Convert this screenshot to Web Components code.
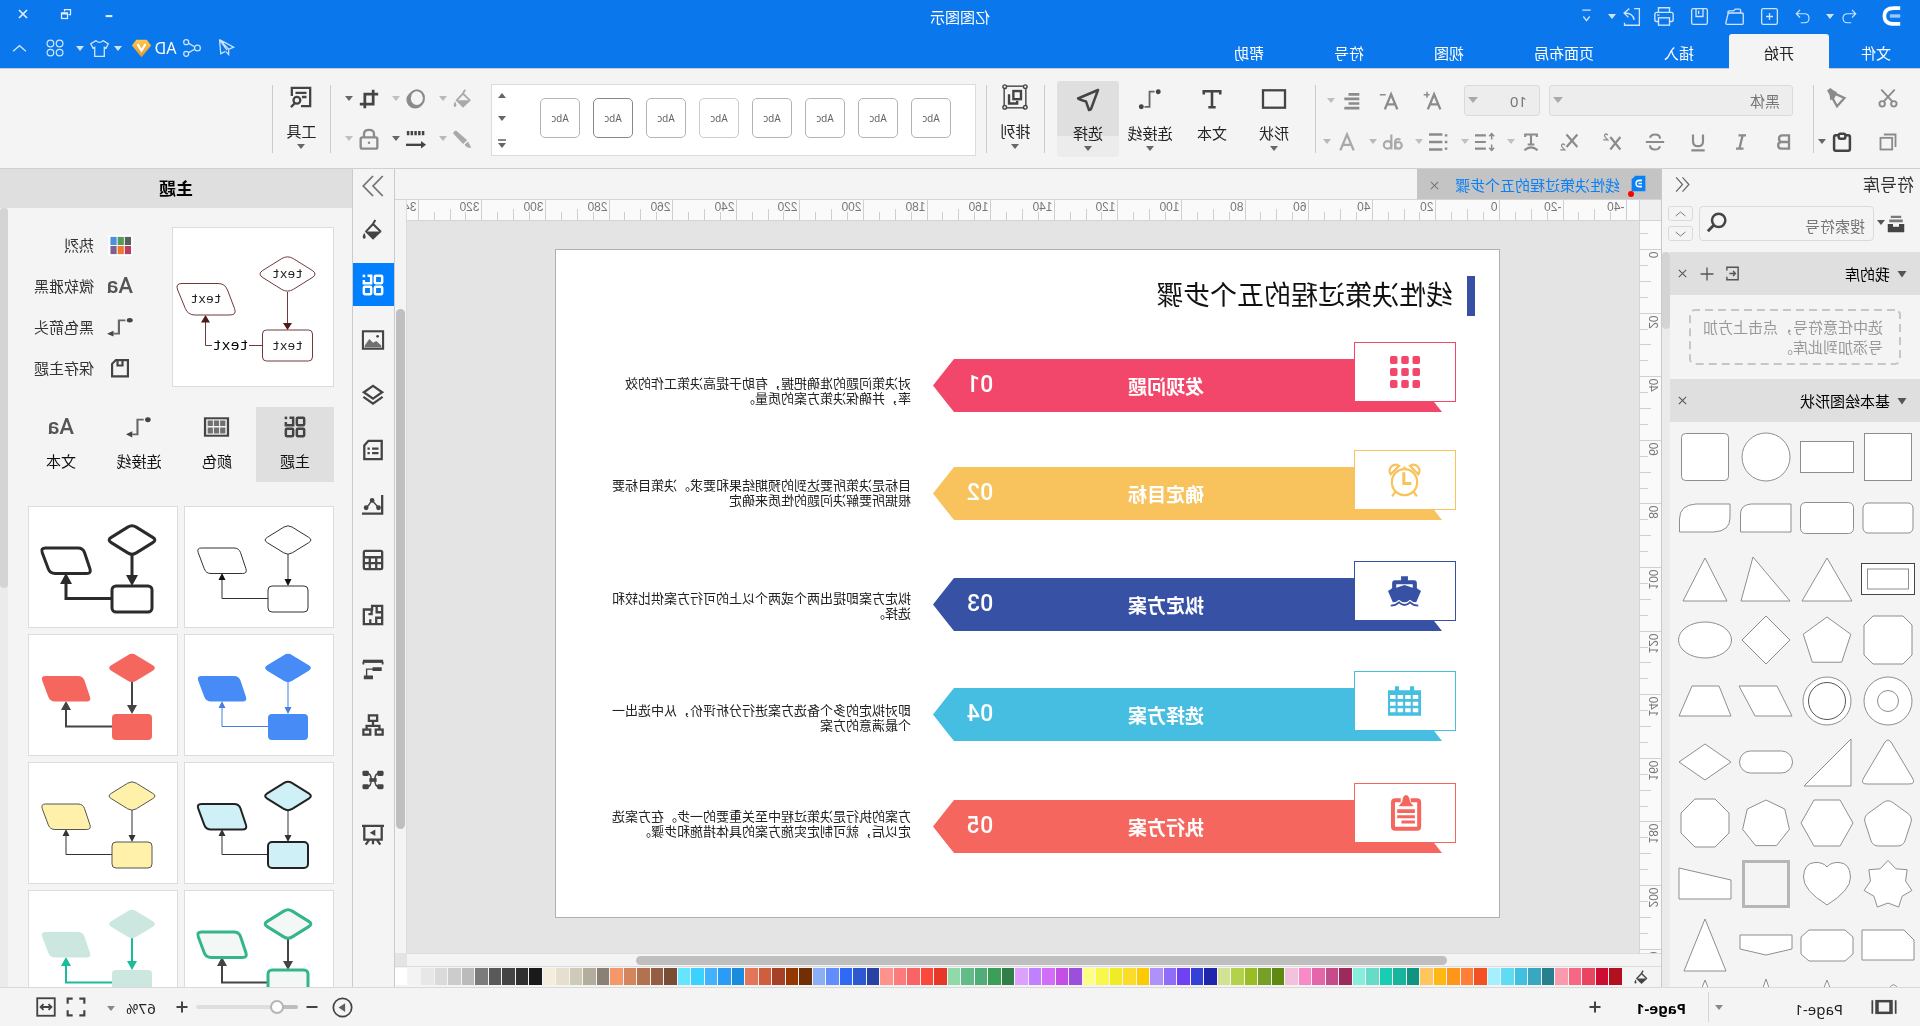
<!DOCTYPE html>
<html lang="zh-CN">
<head>
<meta charset="utf-8">
<title>亿图图示</title>
<style>
html, body { margin: 0; height: 100%; overflow: hidden; }
body { font: 15px/20px "Noto Sans", "Noto Sans CJK SC", sans-serif; color: #222; background: #f4f4f4; }
</style>
</head>
<body>
<diagram-app></diagram-app>
<script>
const BASE = `
:host { box-sizing: border-box; }
*, *::before, *::after { box-sizing: border-box; }
button { font: inherit; color: inherit; background: none; border: 0; padding: 0; margin: 0; display: flex; align-items: center; justify-content: center; }
h1, h2, p { margin: 0; font: inherit; }
svg { display: block; }
`;
function define(tag, css, html) {
  customElements.define(tag, class extends HTMLElement {
    connectedCallback() {
      if (this.shadowRoot) return;
      this.attachShadow({ mode: 'open' }).innerHTML =
        '<style>' + BASE + css + '</style>' + (typeof html === 'function' ? html(this) : html);
    }
  });
}

/* ---------- geometry helpers ---------- */
function poly(pts, r = 0) {
  if (!r) return 'M' + pts.map(p => p.join(' ')).join('L') + 'Z';
  const n = pts.length; let d = '';
  const toward = (a, b) => {
    const l = Math.hypot(b[0] - a[0], b[1] - a[1]);
    return [(a[0] + (b[0] - a[0]) * r / l).toFixed(2), (a[1] + (b[1] - a[1]) * r / l).toFixed(2)];
  };
  pts.forEach((p, i) => {
    const a = toward(p, pts[(i + n - 1) % n]), b = toward(p, pts[(i + 1) % n]);
    d += (i ? 'L' : 'M') + a.join(' ') + 'Q' + p.join(' ') + ' ' + b.join(' ');
  });
  return d + 'Z';
}
function ring(n, r, cy = 30, r2) {
  const out = [], m = r2 ? n * 2 : n;
  for (let i = 0; i < m; i++) {
    const a = -Math.PI / 2 + i * 2 * Math.PI / m, q = r2 && i % 2 ? r2 : r;
    out.push([30 + q * Math.cos(a), cy + q * Math.sin(a)]);
  }
  return out;
}

/* ---------- icons ---------- */
const L = (w, d) => `<g fill="none" stroke="currentColor" stroke-width="${w}">${d}</g>`;
const F = d => `<g fill="currentColor">${d}</g>`;
const ICONS = {
  logo: `<path d="M1 2.500H9Q21 2.500 21 12T9 21.500H1" fill="none" stroke="#fff" stroke-width="4.500"/><path d="M1 12H14" stroke="#9cc9fa" stroke-width="4"/>`,
  undo: L(1.5, '<path d="M8 4L3 9L8 14M3 9H14Q20 9 20 15Q20 21 14 21H9"/>'),
  redo: L(1.5, '<path d="M16 4L21 9L16 14M21 9H10Q4 9 4 15Q4 21 10 21H15"/>'),
  newdoc: L(1.5, '<rect x="3" y="3" width="18" height="18" rx="2"/><path d="M12 8V16M8 12H16"/>'),
  open: L(1.5, '<path d="M3 21Q2 21 2 19.500V9.500Q2 8 3.500 8H18Q19 8 19.500 9.500L22 19.500Q22 21 20.500 21ZM5 8V5Q5 3.500 6.500 3.500H11L13 5.500H18Q19.500 5.500 19.500 7V9"/>'),
  save: L(1.5, '<rect x="3" y="3" width="18" height="18" rx="2"/><path d="M8 3V12H16V3M13 5.500V9"/>'),
  print: L(1.5, '<path d="M6 8V3H18V8M6 18H4Q2 18 2 16V10Q2 8 4 8H20Q22 8 22 10V16Q22 18 20 18H18"/><rect x="6" y="14" width="12" height="8"/><path d="M17 11H19.500"/>'),
  export: L(1.5, '<path d="M9 3H3V22H20V19M9 16Q10 8 20 8M14.500 3L20.500 8L15.500 13"/>'),
  more: L(1.800, '<path d="M6 3H18M7.500 12L12 18L16.500 12"/>'),
  close: L(2.300, '<path d="M4 4L20 20M20 4L4 20"/>'),
  closeb: L(3.500, '<path d="M4 4L20 20M20 4L4 20"/>'),
  restore: L(2.500, '<path d="M7 13H3V3H15V7"/><rect x="9" y="10" width="12" height="11"/><path d="M9 11H21" stroke-width="4"/>'),
  min: L(5, '<path d="M4 17H20"/>'),
  plane: L(1.500, '<path d="M21 2L4 11L10 13.500ZM21 2L19.500 19L14 16M10 13.500V20L13 16.500M21 2L12 14.500"/>'),
  share: L(1.500, '<circle cx="5.500" cy="12" r="3.500"/><circle cx="19" cy="5" r="3"/><circle cx="19" cy="19" r="3"/><path d="M9 10.500L16 6.500M9 13.500L16 17.500"/>'),
  gem: `<defs><linearGradient id="g" x2="0" y2="1"><stop stop-color="#ffc84a"/><stop offset="1" stop-color="#e8962e"/></linearGradient></defs><path d="M6 2H18L23 8.500L12 22L1 8.500Z" fill="url(#g)"/><path d="M7.500 7L12 14.500L16.500 7" fill="none" stroke="#fff" stroke-width="2.500"/>`,
  shirt: L(1.500, '<path d="M8 3Q12 7 16 3L22 6.500L19.500 11.500L17.500 10.500V21H6.500V10.500L4.500 11.500L2 6.500Z"/>'),
  clover: L(1.500, '<rect x="2.500" y="2.500" width="8" height="8" rx="4"/><rect x="13.500" y="2.500" width="8" height="8" rx="4"/><rect x="2.500" y="13.500" width="8" height="8" rx="4"/><rect x="13.500" y="13.500" width="8" height="8" rx="4"/>'),
  up: L(1.800, '<path d="M3 16L12 8L21 16"/>'),
  down: L(1.800, '<path d="M3 8L12 16L21 8"/>'),
  cut: L(2.300, '<path d="M4 2L17 16M20 2L7 16"/><circle cx="5" cy="19" r="3.300"/><circle cx="19" cy="19" r="3.300"/>'),
  copy: L(2.200, '<path d="M3 18V3H17"/><rect x="7" y="7" width="14" height="14"/>'),
  brush: L(2.800, '<path d="M3 12L14 7L17 13L12 22Z"/>') + F('<path d="M12 5L16 3L20 0L24 3L21 8L20 15L17 13Z"/>'),
  paste: L(3, '<rect x="2.500" y="4" width="19" height="18.500" rx="2"/><rect x="8" y="2" width="8" height="6" rx="2" fill="#f4f4f4"/>'),
  bold: L(2.800, '<path d="M6 4H14Q18 4 18 8Q18 12 14 12H6ZM6 12H15Q19 12 19 16Q19 20 15 20H6Z"/>'),
  italic: L(2.800, '<path d="M6 4H15M9 20H18M10 4L14 20"/>'),
  under: L(2.600, '<path d="M6 3V11Q6 17 12 17Q18 17 18 11V3M4 22H20"/>'),
  strike: L(2.500, '<path d="M18 7Q17 3 12 3Q6 3 6 8M6 17Q7 21 12 21Q18 21 18 16M1 12H23"/>'),
  sup: L(2.600, '<path d="M2 6L14 21M14 6L2 21"/><path d="M17 4Q18 2 20 2.500Q22 4 20 6.500L17 9.500H22.500" stroke-width="1.500"/>'),
  sub: L(2.600, '<path d="M2 3L15 18M15 3L2 18"/><path d="M17 16Q18 14 20 14.500Q22 16 20 18.500L17 21.500H22.500" stroke-width="1.500"/>'),
  tcolor: L(2.500, '<path d="M5 6V3H19V6M12 3V15M8 15H16M4 22Q12 15 20 22"/>'),
  spacing: L(2.600, '<path d="M11 4H24M11 12H24M11 20H24"/><path d="M4 2V9M4 15V22M1 5L4 2L7 5M1 19L4 22L7 19" stroke-width="1.800"/>'),
  list: L(2.800, '<path d="M8 3H24M8 12H24M8 21H24M2 4H5M2 12H5M2 20H5"/>'),
  align: L(3.200, '<path d="M2 4H15M2 9.500H20M2 15H15M2 20.500H20"/>'),
  afont: L(2.800, '<path d="M4 22L12 3L20 22M7 15.500H17"/>'),
  ab: L(2.600, '<circle cx="5.500" cy="16" r="4"/><path d="M3 9Q9 7 9.500 12V21M14 3V21"/><circle cx="18.500" cy="15.500" r="4.500"/>'),
  aplus: L(2.800, '<path d="M2 22L9.500 4L17 22M5 16H14.500"/><path d="M18 1V8M15 4.500H22" stroke-width="1.800"/>'),
  aminus: L(2.800, '<path d="M2 22L9.500 4L17 22M5 16H14.500"/><path d="M16 4.500H23" stroke-width="1.800"/>'),
  rect: L(2.500, '<rect x="0" y="2.500" width="24" height="19"/>'),
  text: L(2.800, '<path d="M3 7V3.500H21V7M12 3.500V21M8 21H16"/>'),
  conn: L(2, '<path d="M7 4H12.500V20.500H18" opacity=".8"/>') + F('<circle cx="3" cy="4" r="2.700"/><circle cx="21.500" cy="20.500" r="2.700"/>'),
  connarrow: L(2, '<path d="M7 4H13V20H18" opacity=".8"/>') + F('<circle cx="3" cy="4" r="2.700"/><path d="M18 16.500L24 20L18 23.500Z"/>'),
  pick: L(2.500, '<path d="M2 3L22 11.500Q22 12.500 14 14.500L11 23Q10 23 9 22Z" stroke-linejoin="round"/>'),
  arrange: L(1.300, '<rect x="2" y="2" width="20" height="20"/><g fill="#f4f4f4"><circle cx="2.500" cy="2.500" r="1.700"/><circle cx="21.500" cy="2.500" r="1.700"/><circle cx="2.500" cy="21.500" r="1.700"/><circle cx="21.500" cy="21.500" r="1.700"/></g>') + L(2.200, '<rect x="6.500" y="6.500" width="7" height="7.500"/><path d="M17.500 9.500V18H10V15.500"/>'),
  bucket: L(2.200, '<path d="M3.500 14L12 5.500L20 14M9.500 1L13 7"/>') + F('<path d="M2.500 13.500H21L12 22.500Z"/><path d="M21.500 15Q25 21 21.500 21.500Q18.500 21 21.500 15"/>'),
  shadow: `<circle cx="13" cy="13" r="10.500" fill="currentColor"/><ellipse cx="11" cy="11" rx="8.500" ry="9.500" fill="#f4f4f4" stroke="currentColor" stroke-width="2.500"/>`,
  crop: L(3.300, '<path d="M1 6H17V23M7 1V18H23"/>'),
  pen: F('<path d="M22 2L24 5L12 18L7 13.500L20 2ZM6 15L10 18.500Q8 23 2 22.500Q4 19 6 15"/>'),
  lines: L(2.800, '<path d="M5 19H24"/><path d="M2 5H24" stroke-width="5" stroke-dasharray="3 1.500"/>') + F('<path d="M6 14.500L0 19L6 23.500Z"/>'),
  lock: L(2.800, '<rect x="2" y="10" width="20" height="13.500" rx="2"/><path d="M6 10V6Q6 1 12 1Q18 1 18 6V10"/>') + F('<circle cx="12" cy="16.500" r="1.500"/>'),
  tools: L(2.500, '<path d="M12 22H2V2H22V11M6 7.500H18M6 12H11"/><circle cx="16.500" cy="15.500" r="3.700"/><path d="M18.500 18.500L23 23"/>'),
  collapseL: L(1.700, '<path d="M12 2L3 12L12 22M21 2L12 12L21 22"/>'),
  collapseR: L(1.700, '<path d="M3 2L12 12L3 22M12 2L21 12L12 22"/>'),
  drawer: F('<path d="M5 1H19V4H5ZM3 6H21V9.500H3Z" opacity=".7"/><path d="M1 12H8V15.500H16V12H23V23H1Z"/>'),
  search: L(3, '<circle cx="10" cy="10" r="8"/><path d="M16 16L23 23" stroke-width="3.500"/>'),
  import: L(2.300, '<path d="M21 7V2H3V22H21V17M17 12H8M11 8L7.500 12L11 16"/>'),
  plus: L(2.300, '<path d="M12 1V23M1 12H23"/>'),
  plusb: L(4, '<path d="M12 1V23M1 12H23"/>'),
  minus: L(4, '<path d="M1 12H23"/>'),
  grid4: L(2.700, '<rect x="2" y="14" width="8" height="8" rx="1"/><rect x="2" y="2" width="8" height="8" rx="1"/><rect x="14" y="14" width="8" height="8" rx="1"/><path d="M18 2H14V10H22V6.500"/>') + F('<rect x="20.500" y="0.700" width="2.800" height="2.800"/>'),
  image: L(2.300, '<rect x="1" y="2.500" width="22" height="19"/>') + `<path d="M3 18L8 11L12 15L15.500 13L21 18V20H3Z" fill="currentColor" opacity=".75" transform="matrix(-1 0 0 1 24 0)"/><circle cx="7" cy="8" r="1.500" fill="currentColor"/>`,
  layers: L(2.500, '<path d="M12 2L22 9L12 16L2 9Z"/><path d="M1.500 14L12 21.500L22.500 14"/>'),
  doc: L(2.500, '<path d="M2.500 2H17L21.500 7V22H2.500ZM6 10.500H13M6 15.500H13M15.500 10.500H18M15.500 15.500H18"/>'),
  chart: L(2.500, '<path d="M2 1V21.500H24"/><path d="M6 15L13 7L19 15" stroke-width="1.500"/>') + F('<circle cx="6" cy="15" r="2.600"/><circle cx="13" cy="7" r="2.600"/><circle cx="19.500" cy="15" r="2.600"/>'),
  table: L(2.500, '<rect x="2" y="2" width="20" height="20" rx="1.500"/><path d="M2 9H22M2 15.500H22M8.500 9V22M15.500 9V22"/>'),
  plan: L(2.500, '<path d="M2 2H13V6H22V22H2ZM2 9H8V2M2 15H8.500V22M15 22V16.500M13.500 6V11H17"/>'),
  gantt: L(3, '<path d="M1 2.500H23" stroke-width="3.500"/><path d="M1.500 3V6M22.500 3V6" stroke-width="2"/><path d="M2.500 11H12.500M12 20H22" stroke-width="4"/><path d="M12 11H19V19" stroke-width="1.500"/>'),
  org: L(2.500, '<rect x="7.500" y="1.500" width="9" height="6"/><rect x="1.500" y="17" width="7.500" height="5.500"/><rect x="15" y="17" width="7.500" height="5.500"/><path d="M12 8V13M5 17V13H19V17"/>'),
  mind: L(1.600, '<path d="M5 5Q10 4 10 12Q10 20 5 19M19 5Q14 4 14 12Q14 20 19 19M9 12H15"/>') + F('<rect x="0.500" y="2" width="7" height="5.500" rx="1.500"/><rect x="16.500" y="2" width="7" height="5.500" rx="1.500"/><rect x="0.500" y="16.500" width="7" height="5.500" rx="1.500"/><rect x="16.500" y="16.500" width="7" height="5.500" rx="1.500"/><rect x="8" y="10" width="8" height="4"/>'),
  present: L(2.500, '<path d="M0 2H24M2.500 2V17H21.500V2M8 17L4 22.500M16 17L20 22.500M12 17V22"/>') + F('<path d="M9.500 6V13L15.500 9.500Z"/>'),
  swatches: `<rect x="-1" y="1" width="26" height="22" rx="2" fill="#fff"/><rect x="1" y="3" width="6.500" height="8.500" fill="#56605f"/><rect x="8.500" y="3" width="6.500" height="8.500" fill="#569a5b"/><rect x="16" y="3" width="6.500" height="8.500" fill="#4b8fe2"/><rect x="1" y="12.500" width="6.500" height="8.500" fill="#b83d63"/><rect x="8.500" y="12.500" width="6.500" height="8.500" fill="#f0752f"/><rect x="16" y="12.500" width="6.500" height="8.500" fill="#80608e"/>`,
  palette: L(2.200, '<rect x="1" y="2.500" width="22" height="19"/>') + `<path d="M3.500 5H8.500V11H3.500ZM9.500 5H14.500V11H9.500ZM15.500 5H20.500V11H15.500ZM3.500 12.500H8.500V19H3.500ZM9.500 12.500H14.500V19H9.500ZM15.500 12.500H20.500V19H15.500Z" fill="currentColor" opacity=".75"/>`,
  savetheme: L(2.600, '<path d="M2.500 2.500H17L21.500 7V22H2.500ZM9 2.500V9H15V2.500"/>'),
  pageview: L(2.500, '<rect x="6" y="5" width="12" height="14" stroke-width="3"/><path d="M2 4V20M22 4V20" stroke-width="1.500"/>'),
  play: L(2, '<circle cx="12" cy="12" r="10.500"/>') + F('<path d="M9 7V17L16.500 12Z" opacity=".85"/>'),
  full: L(2.600, '<path d="M2 8V2H8M16 2H22V8M22 16V22H16M8 22H2V16"/>'),
  fit: L(2.200, '<rect x="1.500" y="1.500" width="21" height="21"/><path d="M6 12H18M9 8.500L5.500 12L9 15.500M15 8.500L18.500 12L15 15.500"/>'),
  docicon: `<path d="M1 1H17L23 6V23H1Z" fill="#0a80f5"/><path d="M6.500 7.500H10Q16 7.500 16 12T10 16.500H6.500M6.500 12H12" fill="none" stroke="#fff" stroke-width="2.300"/>`,
  dots9: F([0, 1, 2].map(r => [0, 1, 2].map(c => `<rect x="${c * 9}" y="${r * 9}" width="6" height="6" rx="1.300"/>`).join('')).join('')),
  clock: L(1.600, '<circle cx="12" cy="13.500" r="9.200"/><path d="M5.500 20L3 23.500M18.500 20L21 23.500M12 2.500V4.500"/><path d="M2 8Q0 5 2.500 2.500Q5 0 8 2Z"/><path d="M22 8Q24 5 21.500 2.500Q19 0 16 2Z"/>') + L(2.200, '<path d="M12.500 6.500V14.500H7"/>'),
  ship: F('<path d="M9.500 1H14.500V4H19Q21 4 21 6.500V10L24 12L20.500 20.500Q18 20.500 16 18.500Q14 20.500 12 20.500Q10 20.500 8 18.500Q6 20.500 3.500 20.500L0 12L3 10V6.500Q3 4 5 4H9.500ZM6 7V9.500L12 7.500L18 9.500V7Z" fill-rule="evenodd"/>') + L(1.300, '<path d="M2 23Q5.500 23 8 20.500Q12 24.500 16 20.500Q18.500 23 22 23"/>'),
  calendar: F('<path d="M0 4H5V1H8V4H16V1H19V4H24V23H0ZM2 7.500V10.500H6V7.500ZM7.500 7.500V10.500H11.500V7.500ZM13 7.500V10.500H17V7.500ZM18.500 7.500V10.500H22.500V7.500ZM2 12.500V15.500H6V12.500ZM7.500 12.500V15.500H11.500V12.500ZM13 12.500V15.500H17V12.500ZM18.500 12.500V15.500H22.500V12.500ZM2 17.500V20.500H6V17.500ZM7.500 17.500V20.500H11.500V17.500ZM13 17.500V20.500H17V17.500ZM18.500 17.500V20.500H22.500V17.500Z" fill-rule="evenodd"/>'),
  clip: L(2.800, '<path d="M8 3.500H3.500Q2 3.500 2 5V21Q2 22.500 3.500 22.500H19Q20.500 22.500 20.500 21V5Q20.500 3.500 19 3.500H15"/>') + F('<path d="M6 7.500L8.500 4.500Q9 0 11.300 0Q13.500 0 14 4.500L16.500 7.500ZM5 9.500H17.500V12H5ZM5 13.500H17.500V15.500H5ZM5 17H14.500V19H5Z"/>'),
  tri: F('<path d="M3 6H21L12 19Z"/>')
};
define('ui-icon', ':host{display:inline-flex;flex:none}', el => {
  const w = +(el.getAttribute('size') || 20), h = +(el.getAttribute('h') || w);
  return `<svg width="${w}" height="${h}" viewBox="0 0 24 24" preserveAspectRatio="none" aria-hidden="true" overflow="visible">${ICONS[el.getAttribute('name')]}</svg>`;
});
define('drop-caret', `:host{display:block;flex:none;width:0;height:0;border:4px solid transparent;border-top:5px solid currentColor;border-bottom:0}:host([up]){transform:rotate(180deg)}`, '');

/* ---------- buttons ---------- */
define('tool-button', `
:host{display:block;flex:none;width:43px;height:31px;color:#8b8b8b}
:host([drop]){width:46px}
:host([wide]){width:47px}
:host([dark]){color:#444}
:host([pale]){color:#a9a9a9}
button{width:100%;height:100%}
:host([drop]) button{justify-content:flex-start;padding-left:7px;gap:6px}
drop-caret{opacity:.8}
:host([dim]) drop-caret{opacity:.5}
`, el => `<button aria-label="${el.getAttribute('icon')}"><ui-icon name="${el.getAttribute('icon')}" size="20"></ui-icon>${el.hasAttribute('drop') ? '<drop-caret></drop-caret>' : ''}</button>`);
define('big-button', `
:host{display:block;flex:none;width:62px;height:76px;color:#444}
button{width:100%;height:100%;flex-direction:column;justify-content:flex-start;padding-top:7px;border-radius:3px}
:host([active]) button{background:linear-gradient(#dfdfdf 55px,#ececec 55px)}
span{margin-top:12px;line-height:22px;color:#222;white-space:nowrap}
drop-caret{margin-top:2px;opacity:.8}
ui-icon{height:22px;align-items:center}
`, el => `<button><ui-icon name="${el.getAttribute('icon')}" size="${el.getAttribute('size') || 22}"></ui-icon><span><slot></slot></span>${el.hasAttribute('drop') ? '<drop-caret></drop-caret>' : ''}</button>`);

/* ---------- title bar ---------- */
define('title-bar', `
:host{display:grid;grid-template-columns:1fr auto 1fr;height:34px;background:#0a77ec;color:#cfe4fc;align-items:center}
.left{display:flex;align-items:center;padding:0 0 2px 19px}
.left>ui-icon{margin-right:16px}
.left button{width:35px;height:30px}
.left .u{gap:6px;width:47px;justify-content:flex-start;padding-left:8px}
.left .r{width:32px}
.left .e{width:43px;gap:5px}
h1{color:#fff;line-height:32px}
.right{display:flex;justify-content:flex-end;padding-right:14px;gap:25px;padding-bottom:7px}
.right button{width:18px;height:20px;color:#e3effd}
`, `
<div class="left"><ui-icon name="logo" size="19" h="20"></ui-icon>
<button class="u" aria-label="撤销"><ui-icon name="undo" size="18"></ui-icon><drop-caret></drop-caret></button>
<button class="r" aria-label="重做"><ui-icon name="redo" size="18"></ui-icon></button>
<button aria-label="新建"><ui-icon name="newdoc" size="21"></ui-icon></button>
<button aria-label="打开"><ui-icon name="open" size="21"></ui-icon></button>
<button aria-label="保存"><ui-icon name="save" size="21"></ui-icon></button>
<button aria-label="打印"><ui-icon name="print" size="22"></ui-icon></button>
<button class="e" aria-label="导出"><ui-icon name="export" size="21"></ui-icon><drop-caret></drop-caret></button>
<button aria-label="更多"><ui-icon name="more" size="17"></ui-icon></button></div>
<h1>亿图图示</h1>
<div class="right"><button aria-label="最小化"><ui-icon name="min" size="10"></ui-icon></button><button aria-label="还原"><ui-icon name="restore" size="12"></ui-icon></button><button aria-label="关闭"><ui-icon name="closeb" size="12"></ui-icon></button></div>`);

define('menu-tabs', `
:host{display:flex;justify-content:space-between;height:35px;background:#0a77ec;color:#fff;border-bottom:1px solid #c8ccd0}
nav{display:flex}
nav button{padding:2px 35px 0;height:35px}
nav button:first-child{padding-left:29px;padding-right:32px}
nav .on{background:#f4f4f4;color:#222;border-radius:3px 3px 0 0}
.right{display:flex;align-items:center;padding:0 5px 6px 0;color:#cfe4fc}
.right button{height:24px}
.plane{width:38px}.share{width:32px}
.user{color:#fff;font-size:16px;gap:3px;width:62px}.user drop-caret{margin-left:6px}
.shirt{width:41px;gap:5px}.clover{width:36px}.up{width:32px;justify-content:flex-end;padding-right:6px}
drop-caret{color:#cfe4fc}
`, `<nav><button>文件</button><button class="on">开始</button><button>插入</button><button>页面布局</button><button>视图</button><button>符号</button><button>帮助</button></nav>
<div class="right"><button class="plane" aria-label="发送"><ui-icon name="plane" size="20"></ui-icon></button><button class="share" aria-label="分享"><ui-icon name="share" size="20"></ui-icon></button><button class="user">AD<ui-icon name="gem" size="21"></ui-icon><drop-caret></drop-caret></button><button class="shirt" aria-label="皮肤"><ui-icon name="shirt" size="21"></ui-icon><drop-caret></drop-caret></button><button class="clover" aria-label="应用"><ui-icon name="clover" size="20"></ui-icon></button><button class="up" aria-label="收起"><ui-icon name="up" size="17"></ui-icon></button></div>`);

/* ---------- ribbon ---------- */
const tb = (s) => s.trim().split(/\s+/).map(t => { const [n, ...a] = t.split(':'); return `<tool-button icon="${n}" ${a.join(' ')}></tool-button>`; }).join('');
define('ribbon-bar', `
:host{display:flex;height:100px;background:#f4f4f4;border-bottom:1px solid #cfcfcf;overflow:hidden}
.sep{flex:none;width:1px;height:68px;margin-top:16px;background:#cbcbcb}
.rows{display:flex;flex-direction:column;gap:10px;padding-top:16px}
.r{display:flex;height:31px}
.clip{width:106px;padding:13px 0 0 10px;gap:13px}
.font{width:497px;padding-left:7px}
.font .r:first-child{padding-left:13px}
.clip .r{gap:8px}
select{appearance:none;height:31px;border:1px solid #dadada;border-radius:3px;background:#ededed;color:#777;font:inherit;padding:0 12px;width:100%;display:block}
.sel{position:relative;margin-right:9px}
.sel drop-caret{position:absolute;right:4px;top:12px;color:#aaa;border-width:5px;border-top-width:6px;border-bottom:0}
.family{width:244px}.size{width:76px;margin-right:10px}
.big{display:flex;padding:12px 12px 0 10px}
.arr,.tool{padding-top:10px;width:57px}
.arr big-button,.tool big-button{width:57px}
.gallery{display:flex;align-items:center;justify-content:space-between;width:485px;height:72px;margin:15px 11px 0 10px;background:#fff;border:1px solid #dcdcdc;padding:0 6px 0 24px}
.cards{display:flex;gap:13px;padding-bottom:5px}
.cards button{width:40px;height:40px;border:1px solid #b4b4b4;border-radius:5px;font-size:10px;color:#666}
.cards button:nth-child(5){border-color:#ccc}.cards button:nth-child(7){border-color:#888}
.ar{display:flex;flex-direction:column;gap:18px;color:#666}
.ar i{display:block;border-top:2px solid #888;padding-top:2px}
.fx{padding-top:14px;gap:9px;width:149px}
`, `
<div class="rows clip"><div class="r">${tb('cut brush')}</div><div class="r">${tb('copy paste:drop:dark')}</div></div>
<div class="sep"></div>
<div class="rows font"><div class="r">
<div class="sel family"><select aria-label="字体"><option>黑体</option></select><drop-caret></drop-caret></div>
<div class="sel size"><select aria-label="字号"><option>10</option></select><drop-caret></drop-caret></div>
${tb('aplus aminus align:drop:dim')}</div>
<div class="r">${tb('bold italic under strike sup sub tcolor:drop:dim spacing:drop:dim list:drop:dim ab:drop:pale afont:drop:pale')}</div></div>
<div class="sep"></div>
<div class="big"><big-button icon="rect" drop>形状</big-button><big-button icon="text">文本</big-button><big-button icon="conn" drop>连接线</big-button><big-button icon="pick" size="24" drop active>选择</big-button></div>
<div class="sep"></div>
<div class="arr"><big-button icon="arrange" size="26" drop>排列</big-button></div>
<div class="sep"></div>
<div class="gallery"><div class="cards">${'<button>Abc</button>'.repeat(8)}</div><div class="ar"><drop-caret up></drop-caret><drop-caret></drop-caret><i><drop-caret></drop-caret></i></div></div>
<div class="rows fx"><div class="r">${tb('bucket:drop:pale:wide shadow:drop:dim:wide crop:drop:dark:wide')}</div><div class="r">${tb('pen:drop:pale:wide lines:drop:dark:wide lock:drop:dim:wide')}</div></div>
<div class="sep"></div>
<div class="tool"><big-button icon="tools" drop>工具</big-button></div>
<div class="sep"></div>`);

/* ---------- symbol library ---------- */
const P = (pts, r) => `<path d="${poly(pts.map(p => [p[0] + 30, p[1] + 30]), r)}"/>`;
const R = (w, h, r = 0) => `<rect x="${30 - w / 2}" y="${30 - h / 2}" width="${w}" height="${h}" rx="${r}"/>`;
const C = (a, b = a) => `<ellipse cx="30" cy="30" rx="${a}" ry="${b}"/>`;
const SHAPES = [
  R(47, 47), R(53, 31), C(24), R(47, 47, 4),
  R(50, 30, 5), R(53, 31, 5), '<path d="M5 16H45Q55.500 17 55.500 26V44H5Z"/>', '<path d="M5 16H39Q55.500 17 55.500 31V44H21Q5 43 5 30Z"/>',
  `<g stroke="#444">${R(53, 31)}</g>${R(41, 20)}`, P([[-25, 22], [0, -21], [25, 22]]), P([[-24, 22], [13, -22], [25, 22]]), P([[-22, 22], [0, -21], [22, 22]]),
  P([[-15, -24], [15, -24], [24, -15], [24, 15], [15, 24], [-15, 24], [-24, 15], [-24, -15]]), `<path d="${poly(ring(5, 25, 32))}"/>`, P([[0, -24], [24, 0], [0, 24], [-24, 0]]), C(26.500, 18),
  C(24) + C(10.500), C(24) + `<g stroke="#555">${C(18.500)}</g>`, P([[-11, -15], [27, -15], [11, 15], [-26, 15]]), P([[-14, -15], [13, -15], [26, 15], [-26, 15]]),
  P([[-28, 22], [0, -25], [28, 22]], 7), P([[-24, -23], [-24, 24], [23, 24]]), R(53, 22, 11), P([[-26, 0], [0, -18], [26, 0], [0, 18]]),
  `<path d="${poly(ring(5, 26, 32), 6)}"/>`, P([[-26, 0], [-13, -23], [13, -23], [26, 0], [13, 23], [-13, 23]]), `<path d="${poly(ring(7, 24, 31))}"/>`, P([[-10, -24], [10, -24], [24, -10], [24, 10], [10, 24], [-10, 24], [-24, 10], [-24, -10]]),
  `<path d="${poly(ring(7, 24.500, 31, 18))}"/>`, '<path d="M30 51Q6 36 6.500 23Q7 9 18 8.500Q26 8 30 13Q34 8 42 8.500Q53 9 53.500 23Q54 36 30 51Z"/>', `<g stroke-width="3" stroke="#b6b6b6" fill="#f4f4f4">${R(45, 45)}</g>`, P([[-26, -4], [26, -16], [26, 15], [-26, 15]]),
  P([[-26, -5], [-16, -15], [26, -15], [26, 15], [-26, 15]]), P([[-18, -15], [18, -15], [26, -8], [26, 9], [18, 16], [-18, 16], [-26, 9], [-26, -8]]), P([[-26, -10], [26, -10], [26, 4], [0, 10], [-26, 4]]), P([[0, -26], [21, 26], [-21, 26]]),
  '<path d="M16 30Q20 2 28 11L34 20"/>', P([[0, -26], [10, 0], [-10, 0]]), P([[0, -27], [9, 0], [-9, 0]]), P([[0, -26], [10, 0], [-10, 0]])
];
define('library-section', `
:host{display:block}
header{display:flex;align-items:center;height:43px;background:#dfdfdf;padding:0 0 0 12px;color:#555}
h2{color:#000;margin-left:6px;flex:1;line-height:43px;padding-top:2px}
button{width:25px;height:24px}
`, el => `<header><ui-icon name="tri" size="12"></ui-icon><h2>${el.getAttribute('heading')}</h2>
${el.hasAttribute('mine') ? '<button aria-label="导入"><ui-icon name="import" size="15"></ui-icon></button><button aria-label="添加"><ui-icon name="plus" size="14"></ui-icon></button>' : ''}<button aria-label="关闭"><ui-icon name="close" size="11"></ui-icon></button></header><slot></slot>`);
define('symbol-library', `
:host{display:flex;flex-direction:column;width:259px;flex:none;background:#f4f4f4;border-right:1px solid #c9c9c9;min-height:0}
.top{display:flex;justify-content:space-between;align-items:center;height:37px;padding:0 12px 6px 6px;color:#333;font-size:17px}
.top button{color:#666}
.find{display:flex;align-items:center;height:46px;padding:0 6px 11px 15px;color:#555}
.find drop-caret{margin:0 3px 3px 2px}
.find>ui-icon{color:#444}
.box{display:flex;align-items:center;width:175px;height:35px;border:1px solid #dadada;border-radius:4px;padding:0 7px 0 8px;color:#444}
.box ui-icon{margin-bottom:3px}
input{flex:1;min-width:0;border:0;outline:0;background:none;font:inherit;padding:4px 0 0;color:#777}
input::placeholder{color:#777;opacity:1}
.step{display:flex;flex-direction:column;gap:5px;margin-left:6px}
.step button{width:25px;height:15px;border:1px solid #dadada;border-radius:3px;color:#777}
.scroll{display:flex;flex:1;min-height:0;overflow:hidden}
.body{width:250px;overflow:hidden}
.track{width:8px;background:#ebebeb}.track i{display:block;height:77px;border-radius:4px;background:#d4d4d4}
.hint{margin:14px 19px;width:212px;height:56px;color:#999;position:relative;padding:8px 14px 8px 18px;line-height:20px;white-space:nowrap}
.hint svg{position:absolute;inset:0}
.shapes{display:grid;grid-template-columns:repeat(4,61px);grid-auto-rows:61px;padding:5px 0 0 2px}
.shapes svg{fill:#fff;stroke:#8e8e8e;stroke-width:1}
`, `
<div class="top"><h2>符号库</h2><button aria-label="折叠"><ui-icon name="collapseL" size="17"></ui-icon></button></div>
<div class="find"><ui-icon name="drawer" size="18"></ui-icon><drop-caret></drop-caret><label class="box"><input type="text" placeholder="搜索符号" aria-label="搜索符号"><ui-icon name="search" size="20"></ui-icon></label>
<div class="step"><button aria-label="上一个"><ui-icon name="up" size="13" h="12"></ui-icon></button><button aria-label="下一个"><ui-icon name="down" size="13" h="12"></ui-icon></button></div></div>
<div class="scroll"><div class="body">
<library-section heading="我的库" mine><div class="hint"><svg width="212" height="56"><rect x="1" y="1" width="210" height="54" rx="5" fill="none" stroke="#c6c6c6" stroke-width="2" stroke-dasharray="8 5"/></svg>选中任意符号，点击上方加<br>号添加到此库。</div></library-section>
<library-section heading="基本绘图形状"><div class="shapes">${SHAPES.map(s => `<svg width="60" height="60">${s}</svg>`).join('')}</div></library-section>
</div><div class="track"><i></i></div></div>`);

/* ---------- rulers ---------- */
function ticks(vertical) {
  let s = ''; const step = 63.6 / 4, origin = vertical ? 28 : 139, from = vertical ? -1 : -8, to = vertical ? 60 : 120, last = vertical ? 44 : 68;
  for (let i = from; i <= to; i++) {
    const p = Math.round(origin + i * step) + 0.5, major = i % 4 === 0, mid = i % 2 === 0;
    if (vertical) s += `<path d="M${major ? 0 : mid ? 10 : 13} ${p}H22"/>`;
    else s += `<path d="M${p} ${major ? 0 : mid ? 9 : 12}V21"/>`;
    if (major && i <= last) s += vertical
      ? `<text transform="translate(12 ${p + 2}) rotate(-90)" text-anchor="end">${i * 5}</text>`
      : `<text x="${p + 2}" y="11">${i * 5}</text>`;
  }
  return s;
}
define('ruler-bar', `:host{display:block;background:#fafafa;overflow:hidden;border-bottom:1px solid #d4d4d4;min-width:0;min-height:0}
:host([vertical]){border-bottom:0;border-right:1px solid #d4d4d4}
svg{width:100%;height:100%;stroke:#cfcfcf;shape-rendering:crispEdges;fill:none}
text{font:12px "Liberation Sans",sans-serif;fill:#777;stroke:none}`, el => `<svg>${ticks(el.hasAttribute('vertical'))}</svg>`);

/* ---------- drawing page ---------- */
define('step-item', `
:host{display:block;position:absolute;left:43px;top:var(--top);color:var(--c)}
.box{position:absolute;left:0;top:0;width:102px;height:60px;background:#fff;border:1px solid var(--c);display:flex;align-items:center;justify-content:center}
.band{margin:17px 0 0 14px;width:509px;height:53px;background:var(--c);clip-path:polygon(42px 0,488px 0,100% 50%,488px 100%,0 100%);display:flex;align-items:center;color:#fff;padding:0 34px 0 238px;justify-content:space-between}
b{font:bold 19px/26px "Noto Sans CJK SC",sans-serif}
em{font:500 23px/26px Roboto,sans-serif;margin-bottom:2px}
`, el => `<div class="band"><b><slot></slot></b><em>${el.getAttribute('no')}</em></div><div class="box"><ui-icon name="${el.getAttribute('icon')}" size="${el.getAttribute('w')}" h="${el.getAttribute('h')}"></ui-icon></div>`);
define('step-note', `:host{display:block;position:absolute;left:588px;top:var(--top);font:13px/15px "Liberation Sans","Noto Sans CJK SC",sans-serif;white-space:nowrap;color:#222}`, '<p><slot></slot></p>');
define('drawing-page', `
:host{display:block;position:absolute;left:139px;top:28px;width:945px;height:669px;background:#fff;border:1px solid #b0b0b0}
.accent{position:absolute;left:24px;top:26px;width:8px;height:40px;background:#3850a4}
h1{position:absolute;left:46px;top:24px;font:27px/40px "Noto Sans CJK SC",sans-serif;color:#111;white-space:nowrap}
`, `<div class="accent"></div><h1>线性决策过程的五个步骤</h1>
<step-item no="01" icon="dots9" w="30" h="32" style="--c:#f2476b;--top:92px">发现问题</step-item>
<step-item no="02" icon="clock" w="33" h="34" style="--c:#f8c25c;--top:200px">确定目标</step-item>
<step-item no="03" icon="ship" w="33" h="32" style="--c:#3751a5;--top:311px">拟定方案</step-item>
<step-item no="04" icon="calendar" w="33" h="32" style="--c:#45bee1;--top:421px">选择方案</step-item>
<step-item no="05" icon="clip" w="34" h="36" style="--c:#f4665e;--top:533px">执行方案</step-item>
<step-note style="--top:126px">对决策问题的准确把握，有助于提高决策工作的效<br>率，并确保决策方案的质量。</step-note>
<step-note style="--top:228px">目标是决策所要达到的预期结果和要求。决策目标要<br>根据所要解决问题的性质来确定</step-note>
<step-note style="--top:341px">拟定方案即提出两个或两个以上的可行方案供比较和<br>选择。</step-note>
<step-note style="--top:453px">即对拟定的多个备选方案进行分析评价，从中选出一<br>个最满意的方案</step-note>
<step-note style="--top:559px">方案的执行是决策过程中至关重要的一步。在方案选<br>定以后，就可制定实施方案的具体措施和步骤。</step-note>`);

/* ---------- palette ---------- */
const COLORS = ('b1101f cc0c33 ea4560 f76683 f99bad 28808f 37a7c2 3fc0df 60dcf2 a6efff f35024 ff7f38 ff951a ffb716 ffc65f ' +
'109380 17b59c 1acdb2 67dac8 85eedd 9a2b5c c54b89 e266a9 fb88c7 f2c2dc 5f8a12 769f28 9abd22 b3d24a d3e194 ' +
'1f26ad 3440d8 6f41f2 8f6df9 ae92f8 fdca00 fbdc29 f0ea27 f9f74b fdff84 9b4fdd c44fe6 d26df9 c080ff dca0ff ' +
'2f7f46 3c9f57 51ad77 63bc87 90d9aa e73729 fb483a fb6464 ff7a7a ff928b 2642a3 2d58d0 3069f3 628dff 8aaff5 ' +
'722f04 933900 a64026 cf5d3e e27658 198cdd 2b9cf5 42b2ff 3bd2ff 66e5ff 784d35 945e45 b3724e d3865e f4986c ' +
'8a8075 b3ad9b cdcab8 e6dfd0 f4eddb 1a1a1a 303030 444444 595959 7b7b7b bbbbbb cccccc dadada e7e7e7 f3f3f3 ffffff').split(' ');
define('color-palette', `
:host{display:flex;flex:none;height:21px;border-top:1px solid #dcdcdc;padding:1px 0 2px 12px;background:#f4f4f4}
ui-icon{width:27px;color:#444;padding-top:2px}
.c{flex:1;display:flex;gap:1px;height:17px}
.c button{flex:1}
`, `<ui-icon name="bucket" size="15"></ui-icon><div class="c">${COLORS.map(c => `<button aria-label="#${c}" style="background:#${c}"></button>`).join('')}</div>`);

/* ---------- editor area ---------- */
define('editor-area', `
:host{display:flex;flex-direction:column;flex:1;min-width:0;background:#f4f4f4}
.tabs{height:30px;display:flex;flex:none}
.tab{display:flex;align-items:center;width:244px;background:#c4c4c4;color:#0a80f5;padding:2px 12px 0 15px}
.ic{position:relative;margin-right:11px}
.ic i{position:absolute;right:-3px;bottom:-1px;width:6px;height:6px;border-radius:3px;background:#f00}
.tab span{flex:1;white-space:nowrap}
.tab button{width:12px;color:#777}
.grid{flex:1;display:grid;grid-template-columns:22px 1fr 12px;grid-template-rows:21px 1fr 13px;min-height:0;border-top:1px solid #d4d4d4}
.corner{background:#efefef;border-right:1px solid #d4d4d4;border-bottom:1px solid #d4d4d4}
.canvas{position:relative;background:#e4e4e4;overflow:hidden;min-width:0}
.v{grid-row:1 / 3;grid-column:3;border-left:1px solid #dcdcdc;padding:109px 1px 0}
.v i{display:block;height:520px;border-radius:5px;background:#bfbfbf}
.h{grid-row:3;grid-column:1 / 3;border-top:1px solid #dcdcdc;padding:2px 229px 0 214px}
.h i{display:block;height:9px;border-radius:5px;background:#bfbfbf}
.x{grid-row:3;grid-column:3;background:#e4e4e4}
`, `<div class="tabs"><div class="tab"><div class="ic"><ui-icon name="docicon" size="15" h="17"></ui-icon><i></i></div><span>线性决策过程的五个步骤</span><button aria-label="关闭"><ui-icon name="close" size="11"></ui-icon></button></div></div>
<div class="grid"><div class="corner"></div><ruler-bar></ruler-bar><ruler-bar vertical></ruler-bar><div class="canvas"><drawing-page></drawing-page></div><div class="v"><i></i></div><div class="h"><i></i></div><div class="x"></div></div>
<color-palette></color-palette>`);

/* ---------- side toolbar ---------- */
define('side-toolbar', `
:host{display:flex;flex-direction:column;align-items:stretch;width:43px;flex:none;border-left:1px solid #cbcbcb;border-right:1px solid #cbcbcb;background:#f4f4f4;color:#444}
button{flex:none;height:43px;margin:6px 0}
.fold{height:32px;margin:1px 0 0;color:#777}
.on{background:#007fff;color:#fff}
`, `<button class="fold" aria-label="展开"><ui-icon name="collapseR" size="26" h="24"></ui-icon></button>` +
'bucket grid4 image layers doc chart table plan gantt org mind present'.split(' ').map(n => `<button aria-label="${n}"${n === 'grid4' ? ' class="on"' : ''}><ui-icon name="${n}" size="22"></ui-icon></button>`).join(''));

/* ---------- theme panel ---------- */
function flow(o) {
  const d = `stroke="${o.s || 'none'}" stroke-width="${o.w || 1}" fill="${o.f || '#fff'}"`, k = o.k || o.l || o.s, a = o.a || 3.5, h = o.h || 7;
  return `<g fill="none" stroke="${o.l || o.s}" stroke-width="${o.lw || 1}"><path d="M47 48V${80 - h}M67 92.500H113V${67 + h}"/></g>
<path fill="${k}" d="M${47 - a} ${80 - h}H${47 + a}L47 80ZM${113 - a} ${67 + h}H${113 + a}L113 67Z"/>
<path ${d} d="${poly([[22, 34], [47, 18.500], [72, 34], [47, 49.500]], 5)}"/><rect ${d} x="27" y="80" width="40" height="26" rx="4"/>
<path ${d} d="${poly([[138.500, 42], [96, 42], [87.500, 67.500], [129, 67.500]], 5)}"/>`;
}
define('flow-card', `:host{display:block}button{width:100%;height:122px;background:#fff;border:1px solid #dcdcdc;justify-content:flex-start}`,
  el => `<button aria-label="主题"><svg width="148" height="120" viewBox="2 1 148 120">${flow(JSON.parse(el.getAttribute('look')))}</svg></button>`);
const LOOKS = [
  { s: '#333', w: 1, k: '#111' }, { s: '#2b2b2b', w: 3, lw: 3, a: 6, h: 11 },
  { f: '#478bf6', l: '#4580dc' }, { f: '#f4665e', l: '#444', lw: 2, a: 5, h: 9 },
  { s: '#222', w: 2, f: '#cff0f6', l: '#333' }, { s: '#555', f: '#fff0aa', l: '#333' },
  { s: '#35b58d', w: 3, f: '#f3f8f7', l: '#444', lw: 2, a: 5, h: 9 }, { f: '#cce7df', l: '#1abc9c', lw: 2, a: 5, h: 9 }
];
define('theme-panel', `
:host{display:flex;flex-direction:column;width:352px;flex:none;background:#f4f4f4;min-height:0}
h2{flex:none;height:39px;line-height:39px;background:#dfdfdf;text-align:center;font-weight:bold;font-size:17px;color:#000}
.scroll{display:flex;flex:1;min-height:0;overflow:hidden;justify-content:space-between}
.track{width:8px;background:#ebebeb}.track i{display:block;height:380px;border-radius:4px;background:#d4d4d4}
.body{padding:19px 0 0 18px;overflow:hidden}
.now{display:flex;gap:39px}
.pv{width:162px;height:160px;background:#fff;border:1px solid #dcdcdc}
.pv text{font:13px "Liberation Mono",monospace;fill:#222;text-anchor:middle}
.pv .m{font-size:15px;fill:#000}
ul{list-style:none;margin:0;padding:0}
li{height:41px}
li button{gap:14px;height:36px;color:#333}
li ui-icon{width:25px;justify-content:center;color:#444}
.aa{width:26px;font:500 22px/22px Roboto,sans-serif;color:#555}
li .aa{margin-right:-1px}
.kinds{display:flex;margin:16px 0 24px}
.kinds button{width:78px;height:75px;flex-direction:column;gap:13px;color:#111;padding-bottom:3px}
.kinds ui-icon{color:#444}
.kinds .on{background:#dfdfdf}
.cards{display:grid;grid-template-columns:150px 150px;gap:6px}
`, () => {
  const c = '#6e3a3a', at = `stroke="${c}" fill="#fff"`;
  return `<h2>主题</h2><div class="scroll"><div class="body"><div class="now"><div class="pv"><svg width="160" height="158" viewBox="1 1 160 158">
<path d="M46.500 65V98M72 118.500H128.500V95" fill="none" stroke="${c}"/><path d="M42 96H51L46.500 103ZM124 95.500H133L128.500 88Z" fill="#521b1b"/>
<path ${at} d="${poly([[16, 47], [46.500, 28], [77, 47], [46.500, 66]], 7)}"/><rect ${at} x="21.500" y="103" width="50" height="31" rx="4"/><path ${at} d="${poly([[159, 56.500], [109, 56.500], [97, 88], [146, 88]], 7)}"/>
<rect x="85" y="110" width="37" height="16" fill="#fff"/><text x="46.500" y="50.500">text</text><text x="128" y="76">text</text><text x="46.500" y="122.500">text</text><text class="m" x="103.500" y="123">text</text></svg></div>
<ul><li><button><ui-icon name="swatches" size="23"></ui-icon>热烈</button></li><li><button><span class="aa">Aa</span>微软雅黑</button></li><li><button><ui-icon name="connarrow" size="26" h="20"></ui-icon>黑色箭头</button></li><li><button><ui-icon name="savetheme" size="20"></ui-icon>保存主题</button></li></ul></div>
<div class="kinds"><button class="on"><ui-icon name="grid4" size="22"></ui-icon>主题</button><button><ui-icon name="palette" size="25" h="22"></ui-icon>颜色</button><button><ui-icon name="connarrow" size="25" h="22"></ui-icon>连接线</button><button><span class="aa">Aa</span>文本</button></div>
<div class="cards">${LOOKS.map(l => `<flow-card look='${JSON.stringify(l)}'></flow-card>`).join('')}</div></div><div class="track"><i></i></div></div>`;
});

/* ---------- status bar ---------- */
define('status-bar', `
:host{display:flex;justify-content:space-between;height:39px;border-top:1px solid #d9d9d9;background:#f4f4f4;color:#444}
div{display:flex;align-items:center}
.l{padding-left:22px}
.pg{width:120px;justify-content:flex-start;margin-left:27px;color:#222;padding-top:3px}
.line{width:1px;height:30px;background:#d4d4d4;margin:0 22px 0 6px}
b{color:#000;padding-top:1px;margin-right:35px}
.r{padding-right:36px}
.m{margin-left:14px}
input{appearance:none;width:102px;height:14px;margin:0 8px 0 8px;background:none}
input::-webkit-slider-runnable-track{height:4px;border-radius:2px;background:linear-gradient(90deg,#bdbdbd 20%,#dedede 20%)}
input::-webkit-slider-thumb{appearance:none;width:14px;height:14px;margin-top:-5px;border-radius:7px;background:#fff;border:2px solid #b5b5b5}
.z{gap:11px;margin:0 21px 0 20px;color:#222;padding-top:2px}
.f{margin-right:10px}
drop-caret{color:#888}
`, `<div class="l"><ui-icon name="pageview" size="28" h="20"></ui-icon><button class="pg">Page-1</button><drop-caret></drop-caret><span class="line"></span><b>Page-1</b><button aria-label="添加页"><ui-icon name="plusb" size="12"></ui-icon></button></div>
<div class="r"><button aria-label="播放"><ui-icon name="play" size="21"></ui-icon></button><button class="m" aria-label="缩小"><ui-icon name="minus" size="12"></ui-icon></button><input type="range" min="0" max="100" value="15" aria-label="缩放"><button aria-label="放大"><ui-icon name="plusb" size="12"></ui-icon></button><button class="z">67%<drop-caret></drop-caret></button><button class="f" aria-label="全屏"><ui-icon name="full" size="20"></ui-icon></button><button aria-label="适应宽度"><ui-icon name="fit" size="20"></ui-icon></button></div>`);

/* ---------- application: the whole interface is drawn flipped left to right ---------- */
define('diagram-app', `
:host{display:flex;flex-direction:column;height:100vh;transform:scaleX(-1)}
main{display:flex;flex:1;min-height:0}
title-bar,menu-tabs,ribbon-bar,status-bar{flex:none}
`, `<title-bar></title-bar><menu-tabs></menu-tabs><ribbon-bar></ribbon-bar><main><symbol-library></symbol-library><editor-area></editor-area><side-toolbar></side-toolbar><theme-panel></theme-panel></main><status-bar></status-bar>`);
</script>
</body>
</html>
